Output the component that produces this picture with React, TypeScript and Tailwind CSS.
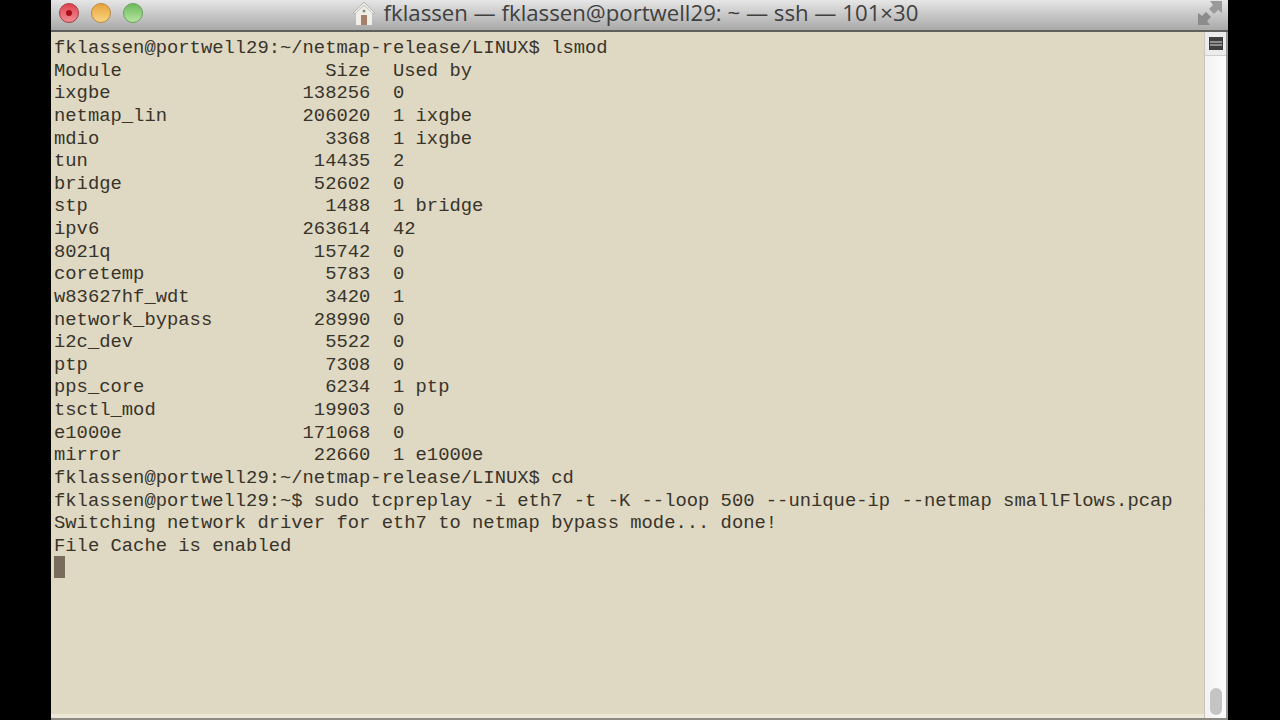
const MODULES: [string, string, string][] = [
  ['ixgbe', '138256', '0'],
  ['netmap_lin', '206020', '1 ixgbe'],
  ['mdio', '3368', '1 ixgbe'],
  ['tun', '14435', '2'],
  ['bridge', '52602', '0'],
  ['stp', '1488', '1 bridge'],
  ['ipv6', '263614', '42'],
  ['8021q', '15742', '0'],
  ['coretemp', '5783', '0'],
  ['w83627hf_wdt', '3420', '1'],
  ['network_bypass', '28990', '0'],
  ['i2c_dev', '5522', '0'],
  ['ptp', '7308', '0'],
  ['pps_core', '6234', '1 ptp'],
  ['tsctl_mod', '19903', '0'],
  ['e1000e', '171068', '0'],
  ['mirror', '22660', '1 e1000e'],
];

const row = (name: string, size: string, used: string) =>
  name.padEnd(20) + size.padStart(8) + '  ' + used;

const LINES = [
  'fklassen@portwell29:~/netmap-release/LINUX$ lsmod',
  row('Module', 'Size', 'Used by'),
  ...MODULES.map(([n, s, u]) => row(n, s, u)),
  'fklassen@portwell29:~/netmap-release/LINUX$ cd',
  'fklassen@portwell29:~$ sudo tcpreplay -i eth7 -t -K --loop 500 --unique-ip --netmap smallFlows.pcap',
  'Switching network driver for eth7 to netmap bypass mode... done!',
  'File Cache is enabled',
];

function Light({ className, dot }: { className: string; dot?: boolean }) {
  return (
    <span className={`flex h-[20px] w-[20px] items-center justify-center rounded-full border ${className}`}>
      {dot && <span className="h-[6px] w-[6px] rounded-full bg-[#a80f1e]" />}
    </span>
  );
}

function HomeIcon() {
  return (
    <svg width="24" height="24" viewBox="0 0 24 24" className="shrink-0">
      <path d="M12 1 L1 12 L3 13 L12 4.5 L21 13 L23 12 Z" fill="#e8e8e4" stroke="#a9a69c" strokeWidth="0.8" />
      <path d="M4 12 L12 5 L20 12 V24 H4 Z" fill="#efeee9" />
      <rect x="9" y="14" width="6" height="10" fill="#a8806a" />
      <circle cx="12" cy="10" r="1.5" fill="#8f8a80" />
    </svg>
  );
}

function ResizeIcon() {
  return (
    <svg width="26" height="26" viewBox="0 0 26 26" className="shrink-0">
      <path d="M1 13 L1 25 L13 25 L10 21 L14 17 L9 12 L5 16 Z" fill="#8b8b8b" />
      <path d="M25 1 L13 1 L16 5 L12 9 L17 14 L21 10 L25 13 Z" fill="#9a9a9a" />
    </svg>
  );
}

export default function App() {
  return (
    <div className="flex h-[720px] w-[1280px] overflow-hidden bg-black pl-[51px] pr-[52px]">
      <div className="flex min-w-0 flex-1 flex-col">
        <div className="flex h-[32px] shrink-0 items-center justify-between border-b-2 border-[#5f5f5c] bg-gradient-to-b from-[#e6e6e6] to-[#a9a9a9] pb-[4px] pl-[8px] pr-[5px]">
          <div className="flex gap-[12px]">
            <Light dot className="border-[#a33a42] bg-gradient-to-b from-[#e0404f] to-[#f08a92]" />
            <Light className="border-[#b98a3e] bg-gradient-to-b from-[#e8a33c] to-[#f8d57f]" />
            <Light className="border-[#65a25a] bg-gradient-to-b from-[#6dbb5c] to-[#b5e59f]" />
          </div>
          <div className="flex items-center gap-[8px] pr-[70px] font-['Open_Sans',sans-serif] text-[22.2px] leading-[26px] text-[#404040]">
            <HomeIcon />
            <span className="whitespace-pre">fklassen — fklassen@portwell29: ~ — ssh — 101×30</span>
          </div>
          <ResizeIcon />
        </div>
        <div className="flex min-h-0 flex-1 border-b-[2px] border-[#8c8a82]">
          <div className="min-w-0 flex-1 border-b-[4px] border-[#ece7d7] bg-[#dfd8c3] pl-[3px] pt-[5px] font-['Liberation_Mono',monospace] text-[18.83px] leading-[22.64px] text-[#38342a]">
            {LINES.map((line) => (
              <div key={line} className="h-[22.64px] whitespace-pre">
                {line}
              </div>
            ))}
            <div className="-mt-px h-[22px] w-[11.3px] bg-[#7a6c5c]" />
          </div>
          <div className="flex w-[24px] shrink-0 flex-col items-center justify-between border-x-2 border-l border-x-[#c9c7bd] border-r-[#9a9a98] bg-gradient-to-r from-[#f2f2f2] to-[#fdfdfd] pb-[3px]">
            <div className="flex h-[24px] w-full flex-col items-center justify-center border-b border-[#d0d0d0] bg-[#ececec]">
              <div className="flex h-[13px] w-[14px] flex-col justify-center gap-[1px] bg-[#3f3f3f] px-[1px]">
                <span className="h-[2px] bg-[#8f8f8f]" />
                <span className="h-[2px] bg-[#8f8f8f]" />
              </div>
            </div>
            <div className="h-[27px] w-[12px] rounded-full bg-[#c4c4c4]" />
          </div>
        </div>
      </div>
    </div>
  );
}
